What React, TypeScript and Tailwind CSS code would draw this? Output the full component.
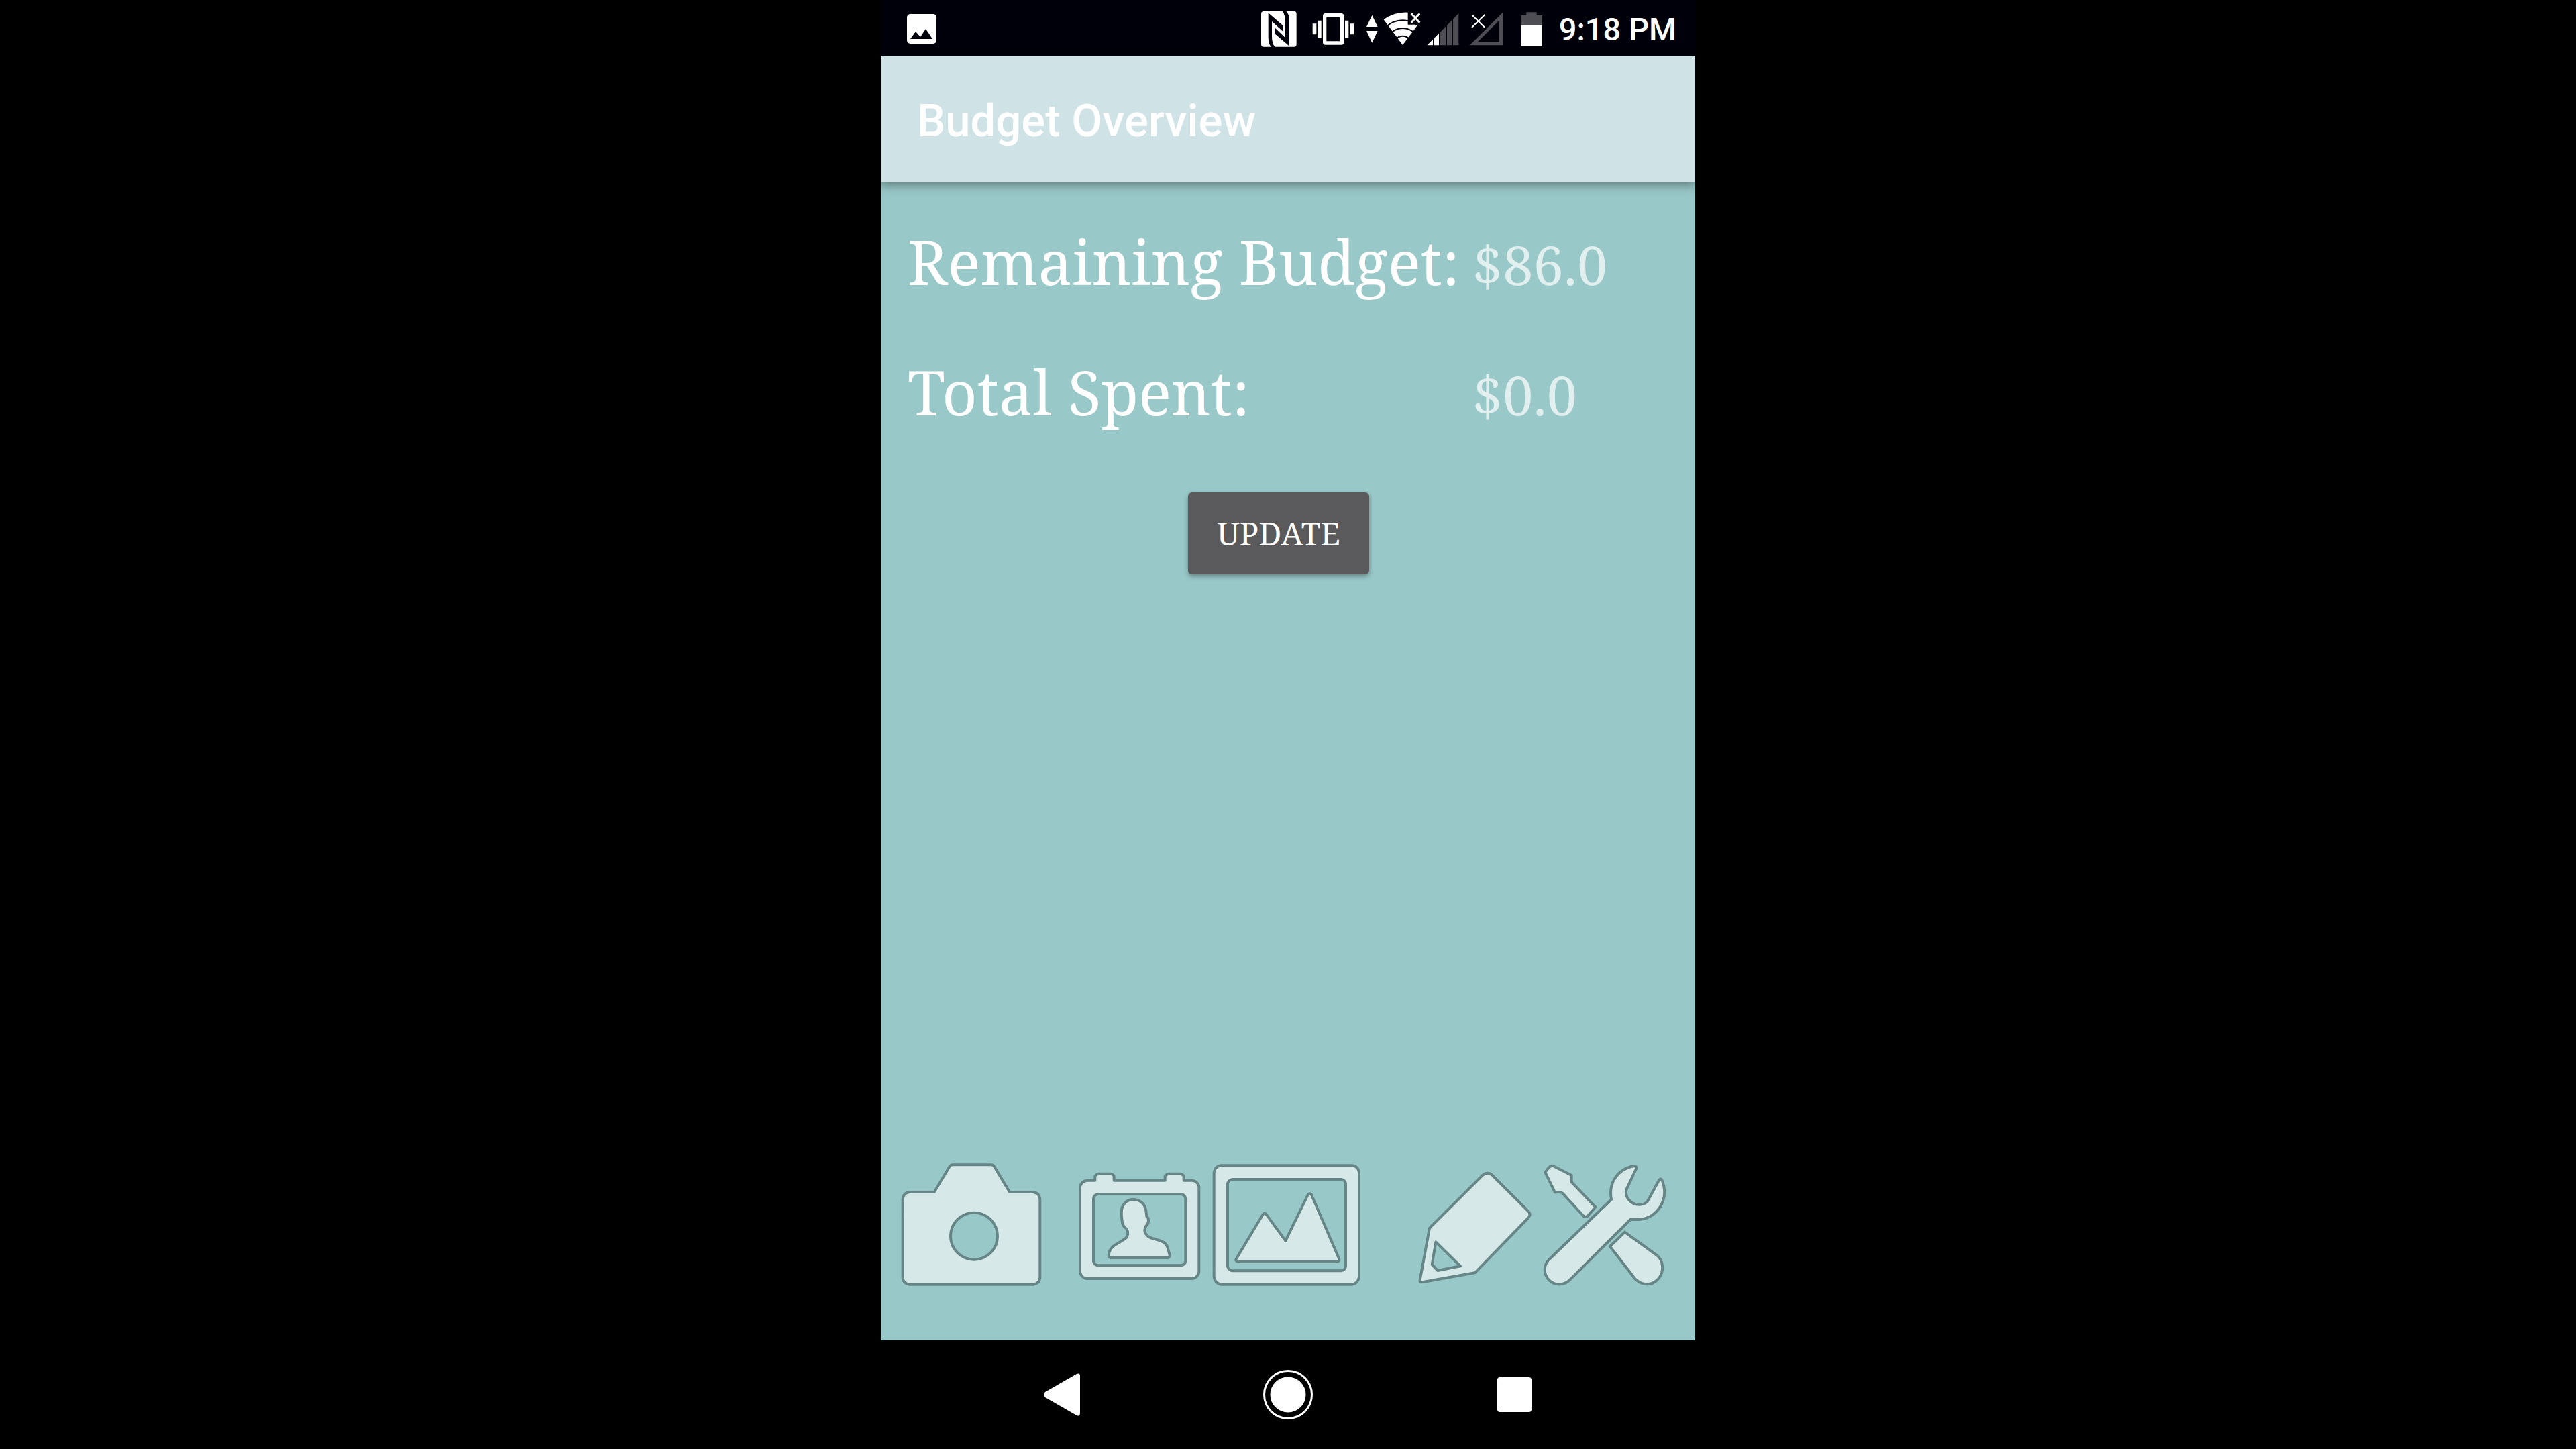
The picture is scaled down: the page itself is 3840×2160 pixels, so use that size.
import type { ReactNode } from "react";

type IconProps = { box: string; className: string; children: ReactNode };

function StatusIcon({ box, className, children }: IconProps) {
  return (
    <svg viewBox={box} className={`h-[54px] shrink-0 ${className}`} fill="#fff" aria-hidden="true">
      {children}
    </svg>
  );
}

function StatusBar() {
  return (
    <div className="flex h-[83px] items-center justify-between bg-[#00000a] pt-0.5 pl-[39px] pr-[28px] text-white">
      <svg viewBox="0 0 44 44" className="size-[44px]" aria-hidden="true">
        <rect width="44" height="44" rx="5" fill="#fff" />
        <path d="M5 37 13 26l7 8 8-12 10 15Z" fill="#00000a" />
      </svg>
      <div className="flex items-center gap-2">
        <StatusIcon box="54 45 192 162" className="w-[64px]">
          <rect x="60" y="48" width="158" height="158" rx="11" />
          <path
            d="M92 55 158 112V138L108 93V160Q108 194 122 207H105Q92 194 92 162ZM186 203 120 147V120L168 166V95Q168 62 154 47H172Q186 60 186 92Z"
            fill="#00000a"
          />
        </StatusIcon>
        <StatusIcon box="270 45 222 162" className="w-[74px]">
          <path d="M290 103h17v48h-17zM313 89h16v77h-16zM435 89h16v77h-16zM457 103h18v48h-18z" />
          <path
            fillRule="evenodd"
            d="M348 57h70q12 0 12 12v116q0 12-12 12h-70q-12 0-12-12V69q0-12 12-12ZM352 75v106h59V75Z"
          />
        </StatusIcon>
        <StatusIcon box="516 45 66 162" className="w-[22px]">
          <path d="M556 65 581 117H531ZM531 135H581L556 188Z" />
        </StatusIcon>
        <StatusIcon box="606 45 168 162" className="w-[56px]">
          <path d="M693 198 608 85Q655 50 716 53V107H761Z" />
          <g fill="none" stroke="#00000a" strokeWidth="6">
            <circle cx="693" cy="198" r="110" />
            <circle cx="693" cy="198" r="75" />
            <circle cx="693" cy="198" r="40" />
          </g>
          <path d="M731 58 769 98M769 58 731 98" stroke="#fff" strokeWidth="9" />
        </StatusIcon>
        <StatusIcon box="798 45 156 162" className="w-[52px]">
          <path d="M802 199 828 173V199ZM834 167 855 146V199H834Z" />
          <path d="M861 140 885 116V199H861ZM891 110 912 89V199H891ZM918 83 943 57V199H918Z" fill="#4d4d53" />
        </StatusIcon>
        <StatusIcon box="18 45 192 162" className="w-[64px]">
          <path fillRule="evenodd" d="M33 199 180 53V199ZM67 185H165V88Z" fill="#4d4d53" />
          <path d="M42 63 100 120M100 63 42 120" stroke="#fff" strokeWidth="6" />
        </StatusIcon>
        <StatusIcon box="234 45 168 162" className="w-[56px]">
          <path d="M286 52h46v14h25v44h-95V66h24Z" fill="#4d4d53" />
          <path d="M262 110h95v93h-95z" />
        </StatusIcon>
        <time className="pt-0.5 pl-0.5 text-[47px] leading-[56px] font-medium">9:18 PM</time>
      </div>
    </div>
  );
}

function ToolButton({ label, box, className, children }: IconProps & { label: string }) {
  return (
    <button type="button" aria-label={label} className="flex cursor-pointer">
      <svg
        viewBox={box}
        className={`h-[190px] ${className}`}
        fill="#d6e9e8"
        stroke="#668586"
        strokeWidth="12"
        strokeLinejoin="round"
        fillRule="evenodd"
        aria-hidden="true"
      >
        {children}
      </svg>
    </button>
  );
}

function Toolbar() {
  return (
    <div className="flex items-center justify-between pr-[41px] pb-[78px] pl-[27px]">
      <div className="flex items-center gap-[14px]">
        <div className="pr-9">
          <ToolButton label="Take photo" box="60 60 648 570" className="w-[216px]">
            <path d="M107 201H218L285 89Q291 79 300 79H473Q482 79 488 89L555 201H661Q691 206 691 236V584Q688 610 661 614H107Q80 610 77 584V231Q80 205 107 201ZM396 293A105 105 0 0 0 396 503A105 105 0 0 0 396 293Z" />
          </ToolButton>
        </div>
        <ToolButton label="Contact card" box="48 30 558 570" className="w-[186px]">
          <path d="M90 119H127V100Q134 90 145 89H196Q207 90 212 100V119H440V100Q447 90 458 89H508Q519 90 524 100V119H562Q588 123 592 148V530Q586 554 562 558H90Q65 554 60 530V148Q65 123 90 119ZM140 180Q124 182 120 199V481Q124 497 140 499H512Q528 497 532 481V199Q528 182 512 180Z" />
          <path d="M298 203C328 204 350 224 355 254L358 280Q366 285 366 298Q365 315 356 322Q349 330 349 346Q354 366 374 375L420 389Q443 397 451 417L461 452Q462 463 452 465H198Q187 464 188 453Q191 426 213 410L255 384Q277 372 273 348Q269 334 256 325Q247 310 247 292Q243 262 248 240Q262 205 298 203Z" />
        </ToolButton>
        <ToolButton label="Gallery" box="48 60 672 570" className="w-[224px]">
          <path d="M90 82H678Q704 86 708 112V582Q702 609 678 614H90Q65 609 59 582V112Q64 86 90 82ZM142 144Q124 147 120 163V534Q124 550 142 553H628Q645 550 648 534V163Q645 147 628 144Z" />
          <path d="M278 301Q285 292 293 301L379 419 479 213Q487 202 495 213L618 498Q622 509 612 512H164Q154 509 158 500Z" />
        </ToolButton>
      </div>
      <div className="flex items-center gap-[14px]">
        <ToolButton label="Edit" box="66 60 522 570" className="w-[174px]">
          <path d="M123 362 361 125Q381 107 402 124L566 288Q577 301 566 315L326 562 90 604Q78 604 80 595ZM151 424 134 525 160 552 261 532Z" />
        </ToolButton>
        <ToolButton label="Settings" box="60 60 558 570" className="w-[186px]">
          <path d="M86 91Q94 82 106 84L188 126V156L295 268 260 308Q250 315 241 308L148 206Q138 199 114 202L70 113Z" />
          <path d="M426 380 570 484C601 510 601 556 579 586C551 620 507 622 473 590L360 444Z" />
          <path d="M366 234C352 163 392 98 467 84Q480 85 477 97L434 188C424 221 451 256 490 257Q513 258 527 243L581 145Q587 139 592 147C618 208 598 270 548 305C516 326 487 325 451 324L184 590C160 617 119 622 91 598C60 570 63 529 86 504Z" />
        </ToolButton>
      </div>
    </div>
  );
}

function NavigationBar() {
  return (
    <nav className="flex h-[162px] items-center justify-between bg-black px-[230px]">
      <button type="button" aria-label="Back" className="cursor-pointer">
        <svg viewBox="0 0 80 80" className="size-20" fill="#fff" aria-hidden="true">
          <path d="M15 36 62 9Q67 7 67 12V68Q67 73 62 71L15 44Q11 40 15 36Z" />
        </svg>
      </button>
      <button type="button" aria-label="Home" className="cursor-pointer">
        <svg viewBox="0 0 80 80" className="size-20" fill="#fff" aria-hidden="true">
          <circle cx="40" cy="40" r="35.5" fill="none" stroke="#fff" strokeWidth="3" />
          <circle cx="40" cy="40" r="26.5" />
        </svg>
      </button>
      <button type="button" aria-label="Recent apps" className="cursor-pointer">
        <svg viewBox="0 0 80 80" className="size-20" fill="#fff" aria-hidden="true">
          <rect x="15" y="14" width="51" height="52" rx="4" />
        </svg>
      </button>
    </nav>
  );
}

const figures = [
  { label: "Remaining Budget:", value: "$86.0" },
  { label: "Total Spent:", value: "$0.0" },
];

export default function App() {
  return (
    <div className="min-h-screen bg-black font-['Roboto',sans-serif]">
      <div className="mx-auto flex min-h-screen w-full max-w-[1214px] flex-col overflow-hidden bg-[#99c8c8]">
        <StatusBar />
        <header className="flex h-[189px] items-center bg-[#cfe2e6] px-[54px] pt-1 shadow-[0_4px_14px_rgba(0,0,0,0.4)]">
          <h1 className="text-[67px] leading-[80px] font-medium text-white">Budget Overview</h1>
        </header>
        <main className="flex flex-1 flex-col font-['Noto_Serif','DejaVu_Serif_Condensed','DejaVu_Serif',serif]">
          <div className="flex flex-1 flex-col pt-14 pr-[68px] pl-[40px]">
            <dl className="grid grid-cols-[842px_1fr] gap-y-[66px]">
              {figures.map((f) => (
                <div key={f.label} className="col-span-2 grid grid-cols-subgrid items-baseline">
                  <dt className="text-[91px] leading-[124px] whitespace-nowrap text-white">{f.label}</dt>
                  <dd className="text-[81px] leading-[124px] text-white/70">{f.value}</dd>
                </div>
              ))}
            </dl>
            <button
              type="button"
              className="mx-auto mt-[84px] h-[122px] w-[270px] cursor-pointer rounded-md bg-[#5a5a5c] text-[47px] text-white shadow-[0_3px_7px_rgba(0,0,0,0.35)]"
            >
              UPDATE
            </button>
          </div>
          <Toolbar />
        </main>
        <NavigationBar />
      </div>
    </div>
  );
}
